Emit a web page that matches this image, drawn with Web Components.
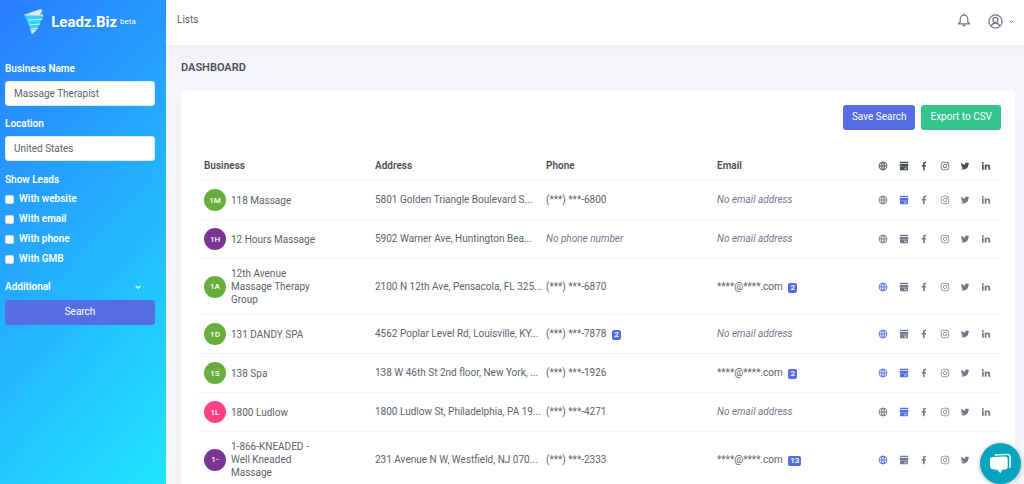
<!DOCTYPE html>
<html lang="en">
<head>
<meta charset="utf-8">
<meta name="viewport" content="width=device-width, initial-scale=1">
<title>Leadz.Biz - Dashboard</title>
<style>
  body { margin: 0; font: 10px/14px Roboto, "Open Sans", sans-serif; color: #5d646c;
    --primary: #556ee6; --success: #34c38f; --heading: #495057; --muted: #74788d; --line: #f3f4f7; }
</style>
</head>
<body>
<leadz-app></leadz-app>
<script>
const define = (name, html, setup) => {
  const template = document.createElement('template');
  template.innerHTML = html;
  customElements.define(name, class extends HTMLElement {
    constructor() {
      super();
      this.attachShadow({ mode: 'open' }).append(template.content.cloneNode(true));
    }
    connectedCallback() { if (setup) setup(this, this.shadowRoot); }
  });
};

const icons = {
  web: '<g fill="none" stroke="currentColor" stroke-width="2"><circle cx="12" cy="12" r="9.500"/><ellipse cx="12" cy="12" rx="4.500" ry="9.500"/><path d="M12 2.500v19M2.500 12h19"/></g>',
  store: '<path fill="currentColor" d="M2 1.500h20v4H2zM1.500 7h21v3q0 2-2.500 2H4q-2.500 0-2.500-2zM2.500 13h19v9h-19z"/><path fill="currentColor" d="M3 11h18v3H3z" opacity=".6"/><path fill="#fff" d="M13 16h6v1.500h-4v1h4V20h-6z" opacity=".8"/>',
  facebook: '<path fill="currentColor" d="M13.400 22v-9h3l.5-3.600h-3.500V7.200c0-1 .3-1.700 1.800-1.700H17V2.200C16.700 2.200 15.600 2 14.300 2c-2.700 0-4.600 1.700-4.600 4.700v2.700H6.700V13h3v9z"/>',
  instagram: '<g fill="none" stroke="currentColor" stroke-width="1.800"><rect x="3" y="3" width="18" height="18" rx="5"/><circle cx="12" cy="12" r="4.300"/></g><circle cx="17.200" cy="6.800" r="1.200" fill="currentColor"/>',
  twitter: '<path fill="currentColor" d="M22.500 5.500a8 8 0 0 1-2.400.7 4.200 4.200 0 0 0 1.800-2.300 8 8 0 0 1-2.700 1 4.200 4.200 0 0 0-7.200 3.900 12 12 0 0 1-8.700-4.400 4.200 4.200 0 0 0 1.300 5.700 4 4 0 0 1-1.900-.5 4.200 4.200 0 0 0 3.400 4.200 4 4 0 0 1-1.900.1 4.200 4.200 0 0 0 4 2.900A8.500 8.500 0 0 1 2 18.500 12 12 0 0 0 20.400 7.700a8 8 0 0 0 2.100-2.200z"/>',
  linkedin: '<path fill="currentColor" d="M2.500 8.500h4V21h-4zM4.500 2.500a2.300 2.300 0 1 1 0 4.600 2.300 2.300 0 0 1 0-4.600zM9 8.500h3.900v1.800c.7-1.200 2-2.100 4-2.100 4.100 0 4.900 2.700 4.900 6.200V21h-4v-6c0-1.500 0-3.300-2-3.300s-2.700 1.600-2.700 3.200V21H9z"/>',
  bell: '<path fill="none" stroke="currentColor" stroke-width="2.200" stroke-linejoin="round" d="M2.500 18.500h19l-3-3V10a6.500 6.500 0 0 0-13 0v5.500zM12 3.500V1"/><path fill="currentColor" d="M9 20h6a3 3 0 0 1-6 0z"/>',
  user: '<g fill="none" stroke="currentColor" stroke-width="2"><circle cx="12" cy="12" r="10.500"/><circle cx="12" cy="9.500" r="4"/><path d="M5 19.500c1.300-3.500 3.700-4.800 7-4.800s5.700 1.300 7 4.800"/></g>',
  chevron: '<path fill="none" stroke="currentColor" stroke-width="4.500" d="M3 8l9 9 9-9"/>',
  chat: '<path fill="none" stroke="#fff" stroke-width="1.500" d="M6 3.200 19 2.500q3 0 3 3v9q0 1.500-1 2"/><path fill="#fff" d="M4 5.300 16.500 4.800q3 0 3 3v7.500q0 2.700-3 3l-2.700.3-2 3.600-2.800-3.500L4 18q-2.800-.3-3-3.500V8.300q0-3 3-3z"/>'
};
define('leadz-icon', `
  <style>
    :host { display: inline-flex; width: var(--size, 10px); height: var(--size, 10px); flex: none; }
    svg { width: 100%; height: 100%; }
  </style>
  <svg viewBox="0 0 24 24" aria-hidden="true"></svg>`,
  (host, root) => { root.querySelector('svg').innerHTML = icons[host.getAttribute('name')]; });

define('leadz-brand', `
  <style>
    :host { display: flex; align-items: center; justify-content: center; height: 44px; color: #fff; }
    svg { width: 20px; height: 26px; margin-right: 7px; }
    b { font-size: 15px; font-weight: 700; }
    small { font-size: 8px; margin-left: 3px; }
  </style>
  <svg viewBox="0 0 20 26" aria-hidden="true">
    <path fill="#e4e7ee" d="M1 5.500 15 .5q4-1 3 2L15 6.500z"/>
    <path fill="#2ed3ff" d="M.5 5.800 19.500 6l-1 4.500-2 1-.5 4-2 1.500-.5 3.500-6 1.500-3-6.500z"/>
    <path fill="none" stroke="#e4e7ee" stroke-width="1.200" d="M.5 5.800h18.500M4 11l14-.5M5 16l11-1M6 20.500l8-1.500"/>
    <path fill="#e4e7ee" d="m6.500 21.800 6.500-1.300-5 5z"/>
  </svg><b>Leadz.Biz</b><small>beta</small>`);

define('leadz-field', `
  <style>
    :host { display: block; margin-bottom: 11px; }
    label { display: block; font-weight: 600; margin-bottom: 5px; }
    input { display: block; box-sizing: border-box; width: 100%; height: 25px; padding: 0 8px 1px;
      border: 1px solid #e3e9f3; border-radius: 3px; background: #fff; color: #5d646c; font: inherit; }
  </style>
  <label for="field"></label><input id="field" type="text">`,
  (host, root) => {
    root.querySelector('label').textContent = host.getAttribute('label');
    root.querySelector('input').value = host.getAttribute('value');
  });

define('leadz-check', `
  <style>
    :host { display: block; }
    label { display: flex; align-items: center; height: 20px; font-weight: 600; }
    input { appearance: none; width: 9px; height: 9px; margin: 0 5px 0 0; border: 1px solid #cfdcea;
      border-radius: 2px; background: #fff; }
    input:checked { background: var(--primary); }
  </style>
  <label><input type="checkbox"><slot></slot></label>`);

define('leadz-button', `
  <style>
    :host { display: block; }
    button { display: block; width: 100%; height: 25px; padding: 0 9px 1px; border: 0; border-radius: 3px;
      background: var(--tone, var(--primary)); color: #fff; font: inherit; white-space: nowrap; }
  </style>
  <button type="button"><slot></slot></button>`);

define('leadz-sidebar', `
  <style>
    :host { display: block; box-sizing: border-box; width: 166px; flex: none; padding: 0 11px 0 5px; color: #fff;
      background: linear-gradient(132deg, #287cff, #20e5ff); }
    form { padding-top: 18px; }
    fieldset { border: 0; margin: 0 0 11px; padding: 0; }
    legend { padding: 1px 0 2px; font-weight: 600; }
    .more { display: flex; align-items: center; justify-content: space-between; box-sizing: border-box; width: 100%;
      border: 0; background: none; margin: 0 0 6px; padding: 0 14px 0 0; color: inherit; font: inherit; font-weight: 600; --size: 6px; }
  </style>
  <leadz-brand></leadz-brand>
  <form>
    <leadz-field label="Business Name" value="Massage Therapist"></leadz-field>
    <leadz-field label="Location" value="United States"></leadz-field>
    <fieldset>
      <legend>Show Leads</legend>
      <leadz-check>With website</leadz-check>
      <leadz-check>With email</leadz-check>
      <leadz-check>With phone</leadz-check>
      <leadz-check>With GMB</leadz-check>
    </fieldset>
    <button class="more" type="button">Additional <leadz-icon name="chevron"></leadz-icon></button>
    <leadz-button>Search</leadz-button>
  </form>`);

define('leadz-topbar', `
  <style>
    :host { display: flex; align-items: center; height: 45px; flex: none; padding: 0 10px 0 11px; box-sizing: border-box;
      background: #fff; box-shadow: 0 9px 18px rgba(18, 38, 63, .03); color: var(--muted); }
    a { color: #5d646c; text-decoration: none; margin-right: auto; padding-bottom: 5px; }
    button { display: flex; align-items: center; gap: 6px; padding: 0; border: 0; background: none; color: inherit; }
    .bell { --size: 14px; margin: 0 17px 5px 0; }
    .user { --size: 15px; margin-bottom: 3px; }
    .user leadz-icon + leadz-icon { --size: 5px; }
  </style>
  <a href="#lists">Lists</a>
  <button class="bell" type="button" aria-label="Notifications"><leadz-icon name="bell"></leadz-icon></button>
  <button class="user" type="button" aria-label="Account"><leadz-icon name="user"></leadz-icon><leadz-icon name="chevron"></leadz-icon></button>`);

define('leadz-avatar', `
  <style>
    :host { display: flex; align-items: center; justify-content: center; width: 22px; height: 22px; flex: none;
      border-radius: 50%; color: #fff; font-size: 8px; font-weight: 500; }
  </style><slot></slot>`);

define('leadz-badge', `
  <style>
    :host { display: inline-block; margin-left: 3px; padding: 0 2px; min-width: 5px; border-radius: 2px; text-align: center;
      background: var(--primary); color: #fff; font-size: 8px; line-height: 10px; font-weight: 600; }
  </style><slot></slot>`);

const green = '#67ae3e', purple = '#7d3594', pink = '#ff4081';
const leads = [
  ['1M', green, '118 Massage', '5801 Golden Triangle Boulevard S...', '6800', 0, 0, 'store'],
  ['1H', purple, '12 Hours Massage', '5902 Warner Ave, Huntington Bea...', '', 0, 0, ''],
  ['1A', green, '12th Avenue Massage Therapy Group', '2100 N 12th Ave, Pensacola, FL 325...', '6870', 0, 2, 'web'],
  ['1D', green, '131 DANDY SPA', '4562 Poplar Level Rd, Louisville, KY...', '7878', 2, 0, 'web'],
  ['1S', green, '138 Spa', '138 W 46th St 2nd floor, New York, ...', '1926', 0, 2, 'web store'],
  ['1L', pink, '1800 Ludlow', '1800 Ludlow St, Philadelphia, PA 19...', '4271', 0, 0, 'store'],
  ['1-', purple, '1-866-KNEADED - Well Kneaded Massage', '231 Avenue N W, Westfield, NJ 070...', '2333', 0, 13, 'web']
];
const links = active => `<div class="links">${['web', 'store', 'facebook', 'instagram', 'twitter', 'linkedin']
  .map(n => `<leadz-icon name="${n}"${active.split(' ').includes(n) ? ' class="on"' : ''}></leadz-icon>`).join('')}</div>`;
const badge = n => n ? ` <leadz-badge>${n}</leadz-badge>` : '';

define('leadz-table', `
  <style>
    :host { display: block; }
    table { width: 100%; table-layout: fixed; border-collapse: separate; border-spacing: 0; }
    .email { width: 164px; }
    .icons { width: 128px; }
    th, td { padding: 8px; border-bottom: 1px solid var(--line); text-align: left; white-space: nowrap; }
    th { padding-bottom: 7px; color: var(--heading); font-weight: 600; }
    .who { display: flex; align-items: center; gap: 5px; white-space: normal; line-height: 13px; }
    .who span { max-width: 84px; }
    em { color: var(--muted); }
    .links { display: flex; justify-content: space-between; padding-right: 2px; margin-left: -3px; color: var(--muted); }
    th .links { color: var(--heading); }
    .on { color: var(--primary); }
  </style>
  <table>
    <colgroup><col><col><col><col class="email"><col class="icons"></colgroup>
    <thead><tr><th>Business</th><th>Address</th><th>Phone</th><th>Email</th><th>${links('')}</th></tr></thead>
    <tbody>${leads.map(([mark, tone, name, address, phone, phones, emails, active]) => `<tr>
      <td><div class="who"><leadz-avatar style="background:${tone}">${mark}</leadz-avatar><span>${name}</span></div></td>
      <td>${address}</td>
      <td>${phone ? `(***) ***-${phone}` : '<em>No phone number</em>'}${badge(phones)}</td>
      <td>${emails ? '****@****.com' : '<em>No email address</em>'}${badge(emails)}</td>
      <td>${links(active)}</td></tr>`).join('')}</tbody>
  </table>`);

define('leadz-card', `
  <style>
    :host { display: block; padding: 14px 14px 14px 15px; border-radius: 3px; background: #fff;
      box-shadow: 0 9px 18px rgba(18, 38, 63, .03); }
    .actions { display: flex; justify-content: flex-end; gap: 6px; margin-bottom: 21px; }
  </style>
  <div class="actions"><slot name="actions"></slot></div>
  <slot></slot>`);

define('leadz-chat', `
  <style>
    :host { position: fixed; right: 3px; bottom: 0; }
    button { display: flex; align-items: center; justify-content: center; width: 41px; height: 41px; padding: 0; border: 0;
      border-radius: 50%; background: #05a5bf; box-shadow: 0 1px 5px rgba(0, 0, 0, .3); --size: 23px; }
  </style>
  <button type="button" aria-label="Open chat"><leadz-icon name="chat"></leadz-icon></button>`);

define('leadz-app', `
  <style>
    :host { display: flex; height: 100vh; overflow: hidden; background: #f6f6fa; }
    .page { display: flex; flex-direction: column; flex: 1; min-width: 0; }
    main { flex: 1; min-height: 0; overflow-y: auto; scrollbar-width: none; padding: 0 9px 0 15px; }
    h1 { margin: 0; padding: 16px 0; font-size: 11px; line-height: 14px; font-weight: 600; color: var(--heading); }
    .export { --tone: var(--success); }
    leadz-topbar { position: relative; }
  </style>
  <leadz-sidebar></leadz-sidebar>
  <div class="page">
    <leadz-topbar></leadz-topbar>
    <main>
      <h1>DASHBOARD</h1>
      <leadz-card>
        <leadz-button slot="actions">Save Search</leadz-button>
        <leadz-button slot="actions" class="export">Export to CSV</leadz-button>
        <leadz-table></leadz-table>
      </leadz-card>
    </main>
  </div>
  <leadz-chat></leadz-chat>`);
</script>
</body>
</html>
